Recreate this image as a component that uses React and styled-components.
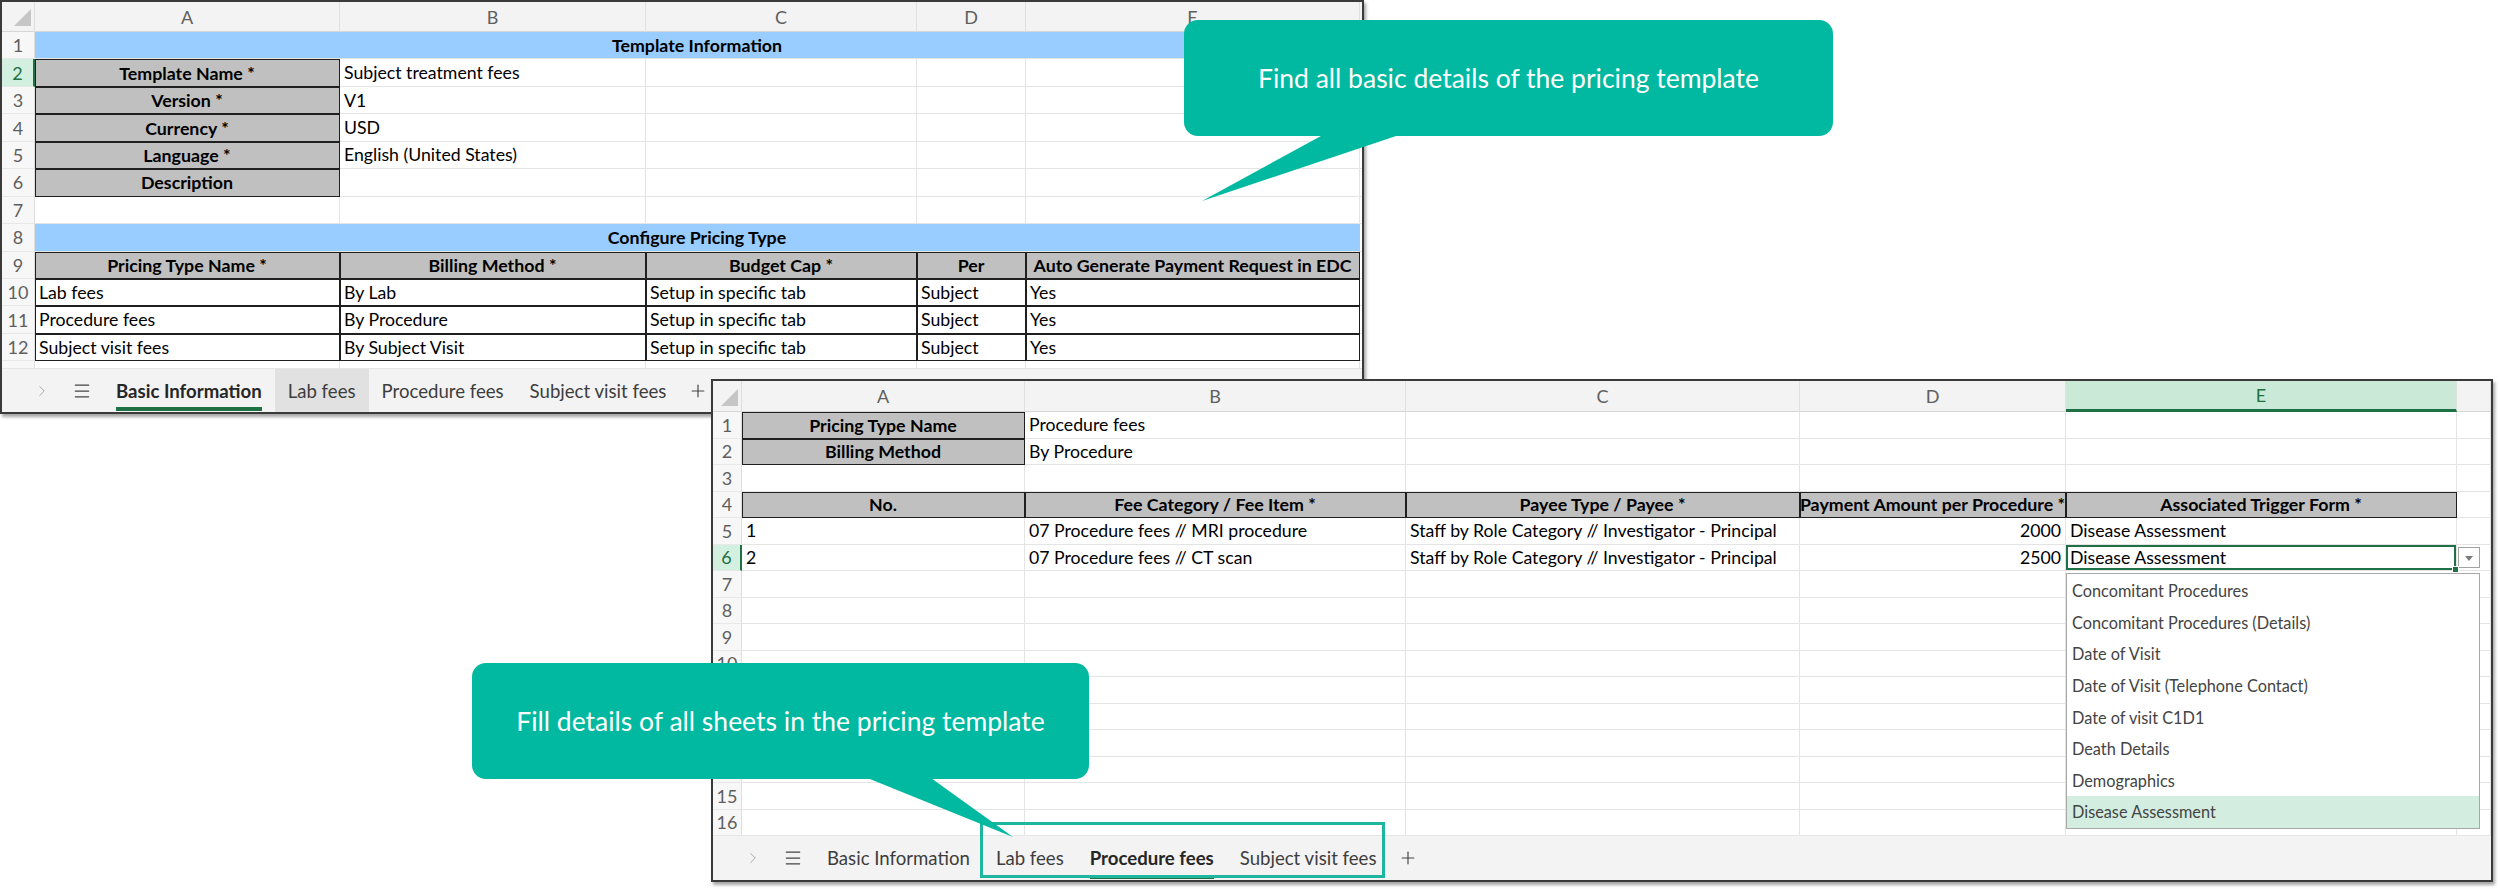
import React from "react";
import styled, { createGlobalStyle, css } from "styled-components";
import { ChevronRight, Menu, Plus } from "lucide-react";

const GlobalStyle = createGlobalStyle`
  html, body {
    margin: 0;
    padding: 0;
    background: #fff;
  }
  body {
    font-family: "Lato", "Noto Sans", sans-serif;
  }
`;

const TEAL = "#00b9a0";
const GREEN = "#1e7145";

const fills = {
  gray: "#c0c0c0",
  blue: "#99ccff",
};

const Stage = styled.div`
  position: relative;
  width: 2500px;
  height: 889px;
  overflow: hidden;
  background: #fff;
`;

const Window = styled.section`
  position: absolute;
  left: ${(p) => p.$x}px;
  top: ${(p) => p.$y}px;
  width: ${(p) => p.$w}px;
  height: ${(p) => p.$h}px;
  z-index: ${(p) => p.$z};
  box-sizing: border-box;
  border: 2px solid #3a3a3a;
  background: #fff;
  box-shadow: 2px 3px 3px rgba(0, 0, 0, 0.35);
  display: flex;
  flex-direction: column;
`;

const Sheet = styled.div`
  position: relative;
  flex: 1;
  min-height: 0;
  overflow: hidden;
  display: grid;
  grid-template-columns: ${(p) => p.$cols};
  grid-template-rows: ${(p) => p.$headH}px;
  grid-auto-rows: ${(p) => p.$rowH}px;
  align-content: start;
`;

const Corner = styled.div`
  position: relative;
  background: #f3f3f3;
  border-right: 1px solid #dedede;
  border-bottom: 1px solid #d6d6d6;
  &::after {
    content: "";
    position: absolute;
    right: 3px;
    bottom: 5px;
    border-left: 17px solid transparent;
    border-bottom: 17px solid #c6c6c6;
  }
`;

const ColHead = styled.div`
  box-sizing: border-box;
  display: flex;
  align-items: center;
  justify-content: center;
  font-size: 18px;
  color: ${(p) => (p.$active ? GREEN : "#5f5f5f")};
  background: ${(p) => (p.$active ? "#cae9d7" : "#f3f3f3")};
  border-right: 1px solid #e0e0e0;
  border-bottom: ${(p) => (p.$active ? `3px solid ${GREEN}` : "1px solid #d6d6d6")};
`;

const RowNum = styled.div`
  box-sizing: border-box;
  display: flex;
  align-items: center;
  justify-content: center;
  font-size: 18px;
  color: ${(p) => (p.$active ? GREEN : "#5f5f5f")};
  background: ${(p) => (p.$active ? "#d3efdf" : "#f7f7f7")};
  border-right: ${(p) => (p.$active ? `2px solid ${GREEN}` : "1px solid #dedede")};
  border-bottom: 1px solid #e8e8e8;
`;

const Cell = styled.div`
  box-sizing: border-box;
  position: relative;
  grid-column: span ${(p) => p.$span || 1};
  display: flex;
  align-items: center;
  justify-content: ${(p) =>
    p.$align === "center" ? "center" : p.$align === "right" ? "flex-end" : "flex-start"};
  padding: 0 ${(p) => (p.$bold ? 2 : 4)}px;
  font-size: ${(p) => (p.$bold ? 17.8 : 17.7)}px;
  font-weight: ${(p) => (p.$bold ? 700 : 400)};
  color: #000;
  white-space: nowrap;
  overflow: hidden;
  background: ${(p) => fills[p.$fill] || "#fff"};
  border-right: 1px solid ${(p) => (p.$fill === "blue" ? fills.blue : "#e4e4e4")};
  border-bottom: 1px solid #e4e4e4;

  ${(p) =>
    p.$boxed &&
    css`
      border-right-color: #1f1f1f;
      border-bottom-color: #1f1f1f;
      box-shadow: inset 1px 1px 0 #1f1f1f;
    `}

  ${(p) =>
    p.$selected &&
    css`
      overflow: visible;
      z-index: 2;
      box-shadow: inset 0 0 0 2px ${GREEN};
      &::after {
        content: "";
        position: absolute;
        right: -3px;
        bottom: -3px;
        width: 5px;
        height: 5px;
        background: ${GREEN};
        border: 1px solid #fff;
      }
    `}
`;

const DropButton = styled.div`
  position: relative;
  box-sizing: border-box;
  width: 22px;
  height: 21px;
  margin-left: -3px;
  border: 1px solid #a3a3a3;
  background: #fff;
  &::after {
    content: "";
    position: absolute;
    left: 6px;
    top: 8px;
    border-left: 4px solid transparent;
    border-right: 4px solid transparent;
    border-top: 5px solid #7a7a7a;
  }
`;

const DropList = styled.ul`
  position: absolute;
  left: ${(p) => p.$x}px;
  top: ${(p) => p.$y}px;
  width: ${(p) => p.$w}px;
  z-index: 3;
  box-sizing: border-box;
  margin: 0;
  padding: 1px 0 0;
  list-style: none;
  background: #fff;
  border: 1px solid #a8a8a8;
`;

const DropItem = styled.li`
  height: 31.6px;
  display: flex;
  align-items: center;
  padding-left: 5px;
  font-size: 16.3px;
  color: #444;
  background: ${(p) => (p.$current ? "#d3eee0" : "transparent")};
`;

const TabBar = styled.nav`
  flex: none;
  height: ${(p) => p.$h}px;
  display: flex;
  align-items: stretch;
  background: #f3f3f3;
  border-top: 1px solid #e6e6e6;
  font-size: 18.6px;
  color: #3d3d3d;
`;

const NavIcon = styled.span`
  display: flex;
  align-items: center;
  justify-content: center;
  width: ${(p) => p.$w}px;
  margin-left: ${(p) => p.$gap}px;
  color: ${(p) => p.$color};
`;

const Tab = styled.div`
  position: relative;
  display: flex;
  align-items: center;
  padding: 0 13px;
  font-weight: ${(p) => (p.$active ? 700 : 400)};
  color: ${(p) => (p.$active ? "#262626" : "#3d3d3d")};
  background: ${(p) => (p.$hover ? "#e1e1e1" : "transparent")};

  ${(p) =>
    p.$active &&
    css`
      &::after {
        content: "";
        position: absolute;
        left: 13px;
        right: 13px;
        bottom: 1px;
        height: 4px;
        background: ${GREEN};
      }
    `}
`;

const TabGroup = styled.div`
  display: flex;
  margin-left: 9px;
`;

const TabFrame = styled.div`
  position: absolute;
  left: 980px;
  top: 822px;
  width: 405px;
  height: 56px;
  box-sizing: border-box;
  border: 3px solid #1fb6a0;
  z-index: 3;
`;

const Callout = styled.div`
  position: absolute;
  left: ${(p) => p.$x}px;
  top: ${(p) => p.$y}px;
  width: ${(p) => p.$w}px;
  height: ${(p) => p.$h}px;
  z-index: 4;
  display: flex;
  align-items: center;
  justify-content: center;
  border-radius: 14px;
  background: ${TEAL};
  color: #fff;
  font-size: 26.5px;
`;

const CalloutText = styled.span`
  position: relative;
  z-index: 1;
`;

const Tail = styled.svg`
  position: absolute;
  left: 0;
  top: 0;
  overflow: visible;
`;

const label = (t) => ({ t, fill: "gray", boxed: true, bold: true, align: "center" });
const band = (t) => ({ t, fill: "blue", bold: true, align: "center", span: 5 });
const boxed = (t) => ({ t, boxed: true });
const plain = (t = "") => ({ t });

// every row covers five data columns plus the narrow trailing one
function padRow(cells, total = 6) {
  const used = cells.reduce((n, c) => n + (c.span || 1), 0);
  return [...cells, ...Array.from({ length: Math.max(0, total - used) }, () => plain())];
}

const infoRows = [
  [band("Template Information")],
  [label("Template Name *"), plain("Subject treatment fees")],
  [label("Version *"), plain("V1")],
  [label("Currency *"), plain("USD")],
  [label("Language *"), plain("English (United States)")],
  [label("Description")],
  [],
  [band("Configure Pricing Type")],
  ["Pricing Type Name *", "Billing Method *", "Budget Cap *", "Per", "Auto Generate Payment Request in EDC"].map(label),
  ["Lab fees", "By Lab", "Setup in specific tab", "Subject", "Yes"].map(boxed),
  ["Procedure fees", "By Procedure", "Setup in specific tab", "Subject", "Yes"].map(boxed),
  ["Subject visit fees", "By Subject Visit", "Setup in specific tab", "Subject", "Yes"].map(boxed),
  [],
];

const payee = "Staff by Role Category // Investigator - Principal";

const procedureRows = [
  [label("Pricing Type Name"), plain("Procedure fees")],
  [label("Billing Method"), plain("By Procedure")],
  [],
  ["No.", "Fee Category / Fee Item *", "Payee Type / Payee *", "Payment Amount per Procedure *", "Associated Trigger Form *"].map(label),
  [plain("1"), plain("07 Procedure fees // MRI procedure"), plain(payee), { t: "2000", align: "right" }, plain("Disease Assessment")],
  [
    plain("2"),
    plain("07 Procedure fees // CT scan"),
    plain(payee),
    { t: "2500", align: "right" },
    { t: "Disease Assessment", selected: true },
    { t: <DropButton /> },
  ],
  ...Array.from({ length: 10 }, () => []),
];

const triggerForms = [
  "Concomitant Procedures",
  "Concomitant Procedures (Details)",
  "Date of Visit",
  "Date of Visit (Telephone Contact)",
  "Date of visit C1D1",
  "Death Details",
  "Demographics",
  "Disease Assessment",
];

const tabs = ["Basic Information", "Lab fees", "Procedure fees", "Subject visit fees"];

function SheetGrid({ cols, headH, rowH, activeCol, activeRow, rows, children }) {
  return (
    <Sheet $cols={cols} $headH={headH} $rowH={rowH}>
      <Corner />
      {["A", "B", "C", "D", "E", ""].map((l, i) => (
        <ColHead key={i} $active={l === activeCol}>
          {l}
        </ColHead>
      ))}
      {rows.map((cells, i) => (
        <React.Fragment key={i}>
          <RowNum $active={i + 1 === activeRow}>{i + 1}</RowNum>
          {padRow(cells).map((c, j) => (
            <Cell
              key={j}
              $span={c.span}
              $fill={c.fill}
              $boxed={c.boxed}
              $bold={c.bold}
              $align={c.align}
              $selected={c.selected}
            >
              {c.t}
            </Cell>
          ))}
        </React.Fragment>
      ))}
      {children}
    </Sheet>
  );
}

function SheetTabs({ height, active, hover }) {
  return (
    <TabBar $h={height}>
      <NavIcon $w={20} $gap={30} $color="#a8a8a8">
        <ChevronRight size={18} strokeWidth={1.3} />
      </NavIcon>
      <NavIcon $w={24} $gap={18} $color="#444">
        <Menu size={20} strokeWidth={1.5} />
      </NavIcon>
      <TabGroup>
        {tabs.map((t) => (
          <Tab key={t} $active={t === active} $hover={t === hover}>
            {t}
          </Tab>
        ))}
      </TabGroup>
      <NavIcon $w={20} $gap={9} $color="#444">
        <Plus size={20} strokeWidth={1.4} />
      </NavIcon>
    </TabBar>
  );
}

export default function App() {
  return (
    <Stage>
      <GlobalStyle />

      <Window $x={0} $y={0} $w={1364} $h={414} $z={1}>
        <SheetGrid cols="33px 305px 306px 271px 109px 334px 1fr" headH={30} rowH={27.45} activeRow={2} rows={infoRows} />
        <SheetTabs height={43} active="Basic Information" hover="Lab fees" />
      </Window>

      <Window $x={711} $y={379} $w={1782} $h={503} $z={2}>
        <SheetGrid
          cols="29px 283px 381px 394px 266px 391px 1fr"
          headH={31}
          rowH={26.5}
          activeCol="E"
          activeRow={6}
          rows={procedureRows}
        >
          <DropList $x={1353} $y={192} $w={414}>
            {triggerForms.map((f, i) => (
              <DropItem key={f} $current={i === triggerForms.length - 1}>
                {f}
              </DropItem>
            ))}
          </DropList>
        </SheetGrid>
        <SheetTabs height={44} active="Procedure fees" />
      </Window>

      <TabFrame />

      <Callout $x={1184} $y={20} $w={649} $h={116}>
        <Tail width="649" height="182">
          <polygon points="148,110 230,110 18,181" fill={TEAL} />
        </Tail>
        <CalloutText>Find all basic details of the pricing template</CalloutText>
      </Callout>

      <Callout $x={472} $y={663} $w={617} $h={116}>
        <Tail width="617" height="175">
          <polygon points="383,110 452,110 541,174" fill={TEAL} />
        </Tail>
        <CalloutText>Fill details of all sheets in the pricing template</CalloutText>
      </Callout>
    </Stage>
  );
}
